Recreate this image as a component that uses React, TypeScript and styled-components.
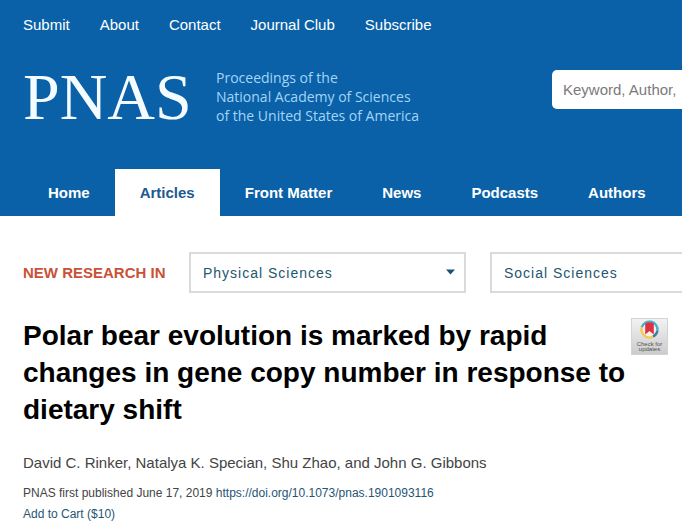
import React from 'react';
import styled, { createGlobalStyle } from 'styled-components';

const GlobalStyle = createGlobalStyle`
  *, *::before, *::after { box-sizing: border-box; }
  body {
    margin: 0;
    background: #fff;
    color: #444;
    font-family: "Liberation Sans", Arial, sans-serif;
    overflow-x: hidden;
  }
  a { color: inherit; text-decoration: none; }
`;

const Header = styled.header`
  background: #0a61a7;
  color: #fff;
`;

const UtilityNav = styled.nav`
  display: flex;
  gap: 30px;
  padding: 16px 23px 0;
  font-size: 15px;
  line-height: 18px;
`;

const Masthead = styled.div`
  display: flex;
  align-items: flex-start;
  padding: 33px 0 42px 23px;
  overflow: hidden;
`;

const Logo = styled.a`
  flex: 0 0 192px;
  font-family: "Liberation Serif", "Times New Roman", serif;
  font-size: 66px;
  line-height: 60px;
  color: #f4fcff;
`;

const Tagline = styled.p`
  flex: 0 0 337px;
  margin: 0;
  padding: 1px 0 0 1px;
  font-family: "Open Sans", sans-serif;
  font-size: 14px;
  line-height: 19px;
  color: #a3d5f8;
`;

const SearchInput = styled.input`
  flex: 1 0 260px;
  height: 39px;
  margin: 3px 0 0;
  padding: 0 11px;
  border: 0;
  border-radius: 5px;
  background: #fff;
  font: 15px/20px "Liberation Sans", Arial, sans-serif;
  color: #444;
  &::placeholder { color: #7b7b7b; opacity: 1; }
`;

const MainNav = styled.nav`
  display: flex;
  padding-left: 23px;
`;

const NavTab = styled.a<{ $active?: boolean }>`
  padding: 0 25px;
  font-size: 15px;
  font-weight: 700;
  line-height: 47px;
  white-space: nowrap;
  background: ${(p) => (p.$active ? '#fff' : 'transparent')};
  color: ${(p) => (p.$active ? '#1d5a92' : '#fff')};
`;

const Filters = styled.section`
  display: flex;
  align-items: center;
  padding: 36px 0 0 23px;
  overflow: hidden;
`;

const FilterLabel = styled.h2`
  flex: 0 0 166px;
  margin: 0;
  font-size: 15px;
  line-height: 20px;
  color: #ca5137;
  white-space: nowrap;
`;

const SelectBox = styled.div`
  position: relative;
  flex: 0 0 277px;
  margin-right: 24px;
`;

const Select = styled.select`
  display: block;
  appearance: none;
  width: 100%;
  height: 41px;
  padding: 0 12px;
  border: 2px solid #d9dadd;
  border-radius: 0;
  background: #fff;
  font: 14px/20px "Liberation Sans", Arial, sans-serif;
  letter-spacing: 1px;
  color: #24566f;
`;

const Caret = styled.svg`
  position: absolute;
  top: 17px;
  right: 11px;
  pointer-events: none;
`;

const Article = styled.main`
  padding: 24px 14px 0 23px;
`;

const TitleRow = styled.div`
  display: flex;
  justify-content: space-between;
  align-items: flex-start;
`;

const Title = styled.h1`
  flex: 0 1 608px;
  margin: 0;
  font-size: 28px;
  line-height: 37px;
  color: #000;
`;

const Badge = styled.button`
  flex: none;
  width: 37px;
  height: 37px;
  margin: 1px 0 0;
  padding: 0;
  border: 0;
  background: none;
`;

const Authors = styled.p`
  margin: 25px 0 0;
  font-size: 15px;
  line-height: 20px;
`;

const Meta = styled.p`
  margin: 0;
  font-size: 12px;
  line-height: 21px;
  a { color: #1f5674; }
`;

const MetaBlock = styled.div`
  padding-top: 10px;
`;

const utilityLinks = ['Submit', 'About', 'Contact', 'Journal Club', 'Subscribe'];
const tabs = ['Home', 'Articles', 'Front Matter', 'News', 'Podcasts', 'Authors'];
const fields = ['Physical Sciences', 'Social Sciences'];

function UpdatesBadge() {
  return (
    <svg width="37" height="37" viewBox="0 0 37 37">
      <defs>
        <linearGradient id="badge-bg" x1="0" y1="0" x2="0" y2="1">
          <stop offset="0" stopColor="#f3f3f3" />
          <stop offset="1" stopColor="#cbcbcb" />
        </linearGradient>
      </defs>
      <rect x="0.5" y="0.5" width="36" height="36" fill="url(#badge-bg)" stroke="#d3d3d3" />
      <circle cx="18.5" cy="11.5" r="8" fill="#f4f0ec" />
      <g fill="none" strokeWidth="2.4">
        <path d="M10.8 9.4a8 8 0 0 1 15.6 3.4" stroke="#49b0c5" />
        <path d="M26.4 12.8a8 8 0 0 1-4.4 5.9" stroke="#3f7f98" />
        <path d="M22 18.7A8 8 0 0 1 10.8 9.4" stroke="#f0cb55" />
      </g>
      <path d="M14.2 5.5Q18.5 3 22.8 5.5V16.5L18.5 13L14.2 16.5Z" fill="#df3041" />
      <g fill="#505050" fontFamily="Liberation Sans, Arial, sans-serif" fontSize="6" textAnchor="middle">
        <text x="18.5" y="28">Check for</text>
        <text x="18.5" y="33">updates</text>
      </g>
    </svg>
  );
}

export default function App() {
  return (
    <>
      <GlobalStyle />
      <Header>
        <UtilityNav>
          {utilityLinks.map((name) => (
            <a key={name} href="#">{name}</a>
          ))}
        </UtilityNav>
        <Masthead>
          <Logo href="#">PNAS</Logo>
          <Tagline>
            Proceedings of the
            <br />
            National Academy of Sciences
            <br />
            of the United States of America
          </Tagline>
          <SearchInput type="search" aria-label="Search" placeholder="Keyword, Author," />
        </Masthead>
        <MainNav>
          {tabs.map((name) => (
            <NavTab key={name} href="#" $active={name === 'Articles'}>{name}</NavTab>
          ))}
        </MainNav>
      </Header>
      <Filters>
        <FilterLabel>NEW RESEARCH IN</FilterLabel>
        {fields.map((name) => (
          <SelectBox key={name}>
            <Select aria-label={name}>
              <option>{name}</option>
            </Select>
            <Caret width="9" height="6" viewBox="0 0 9 6" aria-hidden="true">
              <path d="M0 0.5H9L4.5 5.5Z" fill="#1d5275" />
            </Caret>
          </SelectBox>
        ))}
      </Filters>
      <Article>
        <TitleRow>
          <Title>
            Polar bear evolution is marked by rapid changes in gene copy number in response to dietary shift
          </Title>
          <Badge type="button" aria-label="Check for updates">
            <UpdatesBadge />
          </Badge>
        </TitleRow>
        <Authors>David C. Rinker, Natalya K. Specian, Shu Zhao, and John G. Gibbons</Authors>
        <MetaBlock>
          <Meta>
            PNAS first published June 17, 2019 <a href="#">https://doi.org/10.1073/pnas.1901093116</a>
          </Meta>
          <Meta>
            <a href="#">Add to Cart ($10)</a>
          </Meta>
        </MetaBlock>
      </Article>
    </>
  );
}
